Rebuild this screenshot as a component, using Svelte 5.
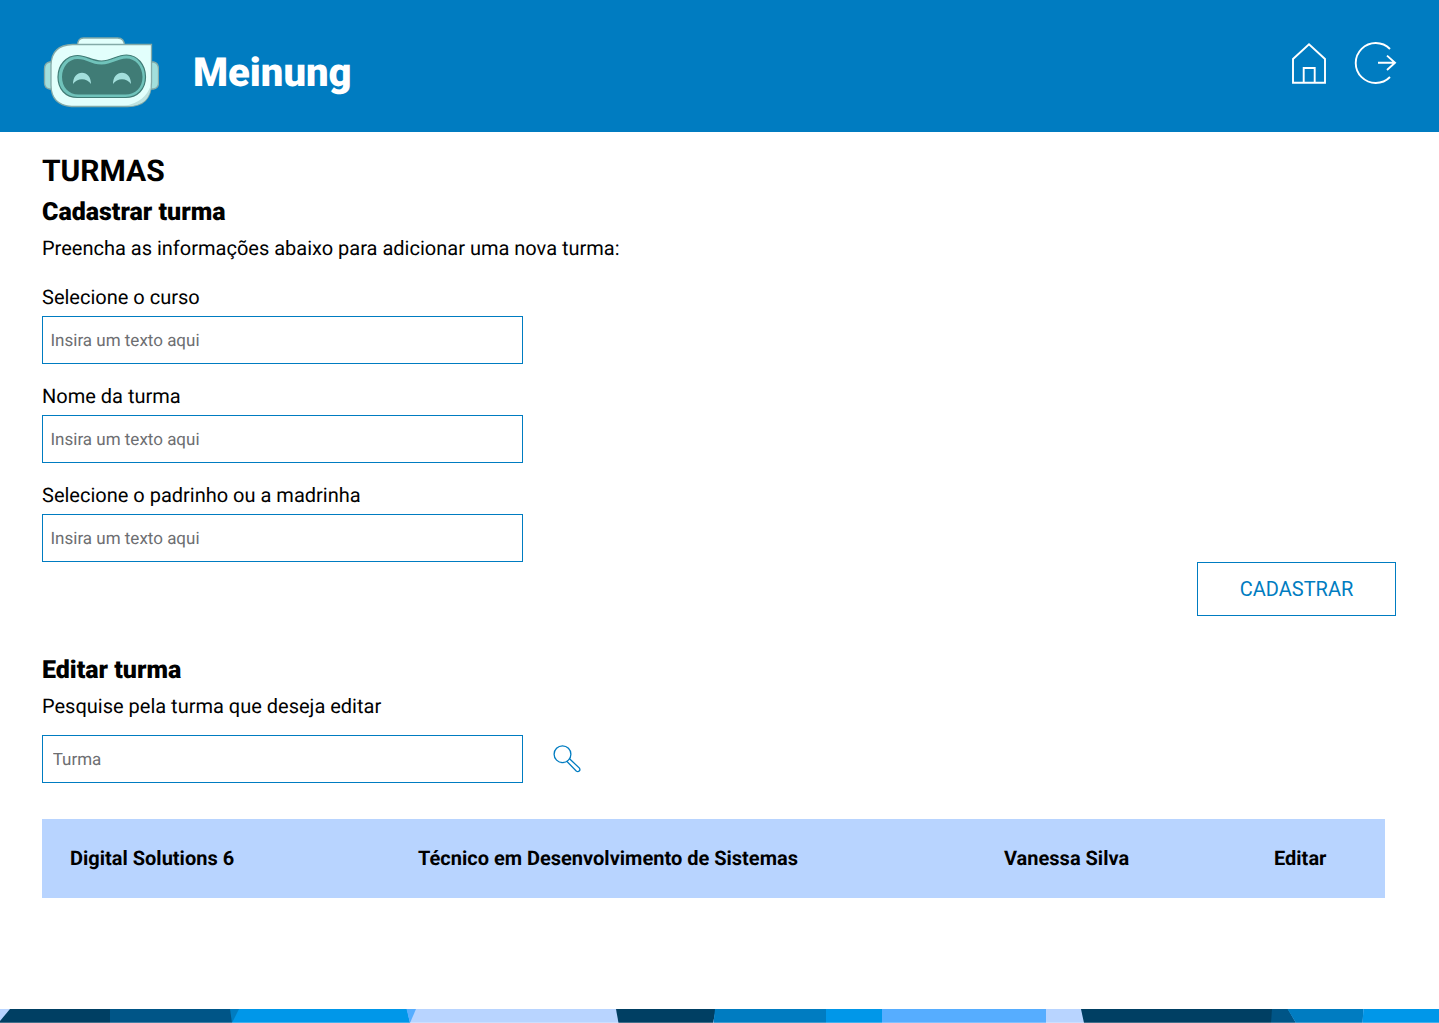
<script>
  const fields = [
    { id: 'curso', label: 'Selecione o curso' },
    { id: 'nome', label: 'Nome da turma' },
    { id: 'padrinho', label: 'Selecione o padrinho ou a madrinha' }
  ];
  const turmas = [
    { nome: 'Digital Solutions 6', curso: 'Técnico em Desenvolvimento de Sistemas', padrinho: 'Vanessa Silva' }
  ];
</script>

<div class="page">
  <header>
    <div class="brand">
      <svg class="robot" width="116" height="72" viewBox="-.5 0 116 72" aria-hidden="true">
        <g stroke="#84aaa8" stroke-width="1.3">
          <path fill="#a3dfdc" d="M9 26H6Q1 27 1 33v14q0 5 5 6h3zM107 26h3q5 1 5 7v14q0 5-5 6h-3z" />
          <path fill="#e2fffc" d="M34 10Q34 2 40 2h34q7 0 7 8z" />
          <path fill="#e2fffc" d="M29 8.500H108V46Q108 70.500 84 70.500H28Q7.500 69 7.500 49V29Q8 9 29 8.500z" />
        </g>
        <path fill="#bee2df" d="M107.400 49Q107 70 84 70H81Q102 66 107.400 49z" />
        <path fill="#70c3bb" stroke="#407c76" stroke-width="1.200" d="M34 19.500c9 0 14 5.500 24 5.500s15-6 25-6c11 0 19 10 19 22s-8 20.500-20 20.500H34C22 61.500 14.500 53 14.500 41S23 19.500 34 19.500z" />
        <path fill="#407c76" d="M34 23c9 0 14 5.500 24 5.500s16-6 25-6c9 0 16 8 16 18.500S92 58.500 82 58.500H35C25 58.500 18.500 51 18.500 41S25 23 34 23z" />
        <path fill="#a3dfdc" d="M29.500 48c0-7 4-11.200 9-11.200s9 4.200 9 11.200c-4-6.500-14-6.500-18 0zM69.500 48c0-7 4-11.200 9-11.200s9 4.200 9 11.200c-4-6.500-14-6.500-18 0z" />
      </svg>
      <span class="name">Meinung</span>
    </div>
    <nav>
      <a href="#home" aria-label="Início">
        <svg width="36" height="42" viewBox="0 0 36 42" fill="none" stroke="#fff" stroke-width="1.900">
          <path d="M2 40.800V17L18 2.200 34 17v23.800zM12.700 40.800V26h11v14.800" />
        </svg>
      </a>
      <a href="#sair" aria-label="Sair">
        <svg width="43" height="42" viewBox="0 0 43 42" fill="none" stroke="#fff" stroke-width="1.900">
          <path d="M36 7A20 20 0 1 0 36 35M24 20.800H41M33 13.600l8 7.200-8 7.200" />
        </svg>
      </a>
    </nav>
  </header>

  <main>
    <h1>TURMAS</h1>
    <section>
      <h2>Cadastrar turma</h2>
      <p>Preencha as informações abaixo para adicionar uma nova turma:</p>
      <form>
        {#each fields as field}
          <div class="field">
            <label for={field.id}>{field.label}</label>
            <input id={field.id} placeholder="Insira um texto aqui" />
          </div>
        {/each}
        <button type="button">CADASTRAR</button>
      </form>
    </section>

    <section class="edit">
      <h2>Editar turma</h2>
      <p>Pesquise pela turma que deseja editar</p>
      <div class="search">
        <input placeholder="Turma" aria-label="Turma" />
        <svg width="30" height="30" viewBox="0 0 30 30" fill="none" stroke="#007cc1" stroke-width="1.300" aria-hidden="true">
          <circle cx="10.500" cy="10.200" r="8.400" />
          <path d="M14.800 17.300l9.400 9.700q1.700 1.300 3 .1t.2-3L17.500 14.700" />
        </svg>
      </div>
      {#each turmas as turma}
        <div class="row">
          <span>{turma.nome}</span>
          <span>{turma.curso}</span>
          <span>{turma.padrinho}</span>
          <span>Editar</span>
        </div>
      {/each}
    </section>
  </main>

  <footer>
    <svg width="1439" height="14" viewBox="0 0 1439 14" aria-hidden="true">
      <path fill="#b8d4ff" d="M0 0H1439V14H0z" />
      <path fill="#003f63" d="M10 0H110V14H0V12z" />
      <path fill="#005587" d="M110 0H232V14H110z" />
      <path fill="#007cc1" d="M230 0H240L233 14H232z" />
      <path fill="#0097e9" d="M239 0H407L410 14H232z" />
      <path fill="#56adff" d="M406.500 0H416L410 14z" />
      <path fill="#003f63" d="M616 0H716L713 14H618.500z" />
      <path fill="#007cc1" d="M715 0H826V14H713.500z" />
      <path fill="#0097e9" d="M826 0H882V14H826z" />
      <path fill="#56adff" d="M882 0H1046V14H882z" />
      <path fill="#003f63" d="M1081 0H1272V14H1084z" />
      <path fill="#005587" d="M1272 0H1288L1296 14H1271z" />
      <path fill="#007cc1" d="M1287.500 0H1363.500L1362.500 14H1296z" />
      <path fill="#0097e9" d="M1363.500 0H1439V14H1362.500z" />
      <path fill="#fff" fill-opacity=".25" d="M0 13H1439V14H0z" />
    </svg>
  </footer>
</div>

<style>
  :global(body) { margin: 0; }
  .page {
    height: 1023px;
    display: flex;
    flex-direction: column;
    overflow: hidden;
    background: #fff;
    color: #000;
    font-family: Roboto, sans-serif;
    font-size: 20px;
    line-height: 24px;
    text-rendering: geometricPrecision;
  }
  header {
    box-sizing: border-box;
    height: 132px;
    flex: none;
    display: flex;
    justify-content: space-between;
    padding: 36px 42px 0 43px;
    background: #007cc1;
  }
  .brand { display: flex; align-items: flex-start; gap: 34px; }
  .name { color: #fff; font-size: 40px; font-weight: 900; line-height: 74px; }
  nav { display: flex; gap: 27px; padding-top: 6px; }
  nav a { display: block; height: 42px; }
  svg { display: block; }
  main { flex: 1; padding: 22px 43px 0 42px; }
  h1 { margin: 0 0 8px; font-size: 30px; line-height: 35px; font-weight: 700; }
  h2 { margin: 0 0 7px; font-size: 25px; line-height: 32px; font-weight: 900; }
  p { margin: 0; }
  form { display: flex; flex-direction: column; align-items: flex-start; padding-top: 25px; }
  .field { display: flex; flex-direction: column; gap: 7px; }
  .field + .field { margin-top: 20px; }
  input {
    box-sizing: border-box;
    width: 481px;
    height: 48px;
    padding: 2px 7.500px 0;
    border: 1px solid #007cc1;
    border-radius: 0;
    background: #fff;
    font: 400 17px Roboto, sans-serif;
    text-rendering: geometricPrecision;
  }
  input::placeholder { color: #6d6e71; opacity: 1; }
  button {
    align-self: flex-end;
    box-sizing: border-box;
    width: 199px;
    height: 54px;
    padding: 0;
    border: 1px solid #007cc1;
    background: #fff;
    color: #007cc1;
    font: 400 20px Roboto, sans-serif;
  }
  .edit { padding-top: 39px; }
  .search { display: flex; gap: 29px; align-items: center; margin-top: 17px; }
  .search input { padding-left: 9.700px; }
  .row {
    display: grid;
    grid-template-columns: 348px 586px 270px auto;
    align-items: center;
    box-sizing: border-box;
    width: 1343px;
    height: 79px;
    margin-top: 36px;
    padding: 0 0 1px 28px;
    background: #b8d4ff;
    font-weight: 700;
  }
  footer { height: 14px; flex: none; }
</style>
